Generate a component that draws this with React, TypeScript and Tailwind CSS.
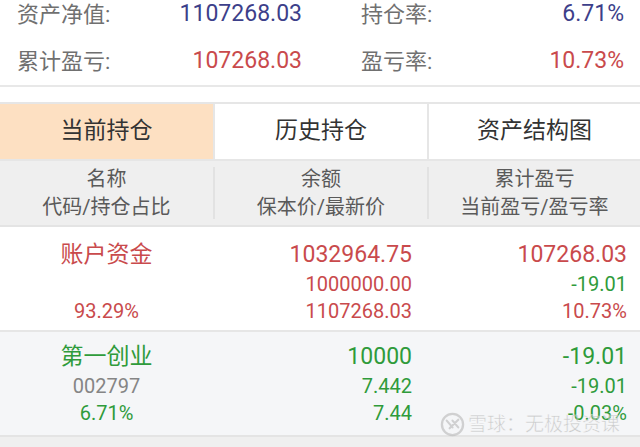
import React from 'react';

const font = { fontFamily: "Roboto, 'Noto Sans CJK SC', sans-serif" };

const RED = 'text-[#c94a4c]';
const GREEN = 'text-[#2f9b3b]';

function SummaryRow({ l1, v1, c1, l2, v2, c2 }: { l1: string; v1: string; c1: string; l2: string; v2: string; c2: string }) {
  return (
    <div className="flex h-[47px] items-center">
      <div className="flex w-1/2 items-center justify-between pl-[17px] pr-[18px]">
        <span className="text-[22px] text-[#707070]">{l1}</span>
        <span className={`text-[23px] ${c1}`}>{v1}</span>
      </div>
      <div className="flex w-1/2 items-center justify-between pl-[41px] pr-[16px]">
        <span className="text-[22px] text-[#707070]">{l2}</span>
        <span className={`text-[23px] ${c2}`}>{v2}</span>
      </div>
    </div>
  );
}

function Watermark() {
  return (
    <div className="pointer-events-none absolute bottom-[8px] right-[20px] flex items-center gap-[3px] opacity-60">
      <svg width="25" height="25" viewBox="0 0 26 26" fill="none">
        <circle cx="13" cy="13" r="11" stroke="#b8b8b8" strokeWidth="2.4" />
        <path d="M7 9 L13 16 M13 9 L19 16 M10 17 L19 8" stroke="#b8b8b8" strokeWidth="2.2" strokeLinecap="round" />
      </svg>
      <span className="text-[19px] text-[#b0b0b0]" style={{ WebkitTextStroke: '0.4px #fff' }}>
        雪球：无极投资课
      </span>
    </div>
  );
}

export default function App() {
  return (
    <div className="relative h-[447px] w-[640px] overflow-hidden bg-[#efefef]" style={font}>
      {/* summary */}
      <div className="-mt-[9px] bg-white pb-[49px]">
        <div className="border-b-2 border-[#e8e8e8]">
          <SummaryRow l1="资产净值:" v1="1107268.03" c1="text-[#3d3f8a]" l2="持仓率:" v2="6.71%" c2="text-[#3d3f8a]" />
          <SummaryRow l1="累计盈亏:" v1="107268.03" c1={RED} l2="盈亏率:" v2="10.73%" c2={RED} />
        </div>
      </div>

      {/* tabs */}
      <div className="-mt-[34px] flex h-[59px] border-y-2 border-[#e6e6e6] bg-white text-[23px] text-[#333]">
        <div className="flex w-[213px] items-center justify-center bg-[#fde0c2]">当前持仓</div>
        <div className="flex w-[214px] items-center justify-center border-l-2 border-[#e6e6e6]">历史持仓</div>
        <div className="flex flex-1 items-center justify-center border-l-2 border-[#e6e6e6]">资产结构图</div>
      </div>

      {/* header */}
      <div className="flex h-[66px] items-center border-b-2 border-[#e4e4e4] bg-[#efefef] text-[20px] leading-[28px] text-[#5a5a5a]">
        <div className="flex w-[213px] flex-col items-center">
          <span>名称</span>
          <span>代码/持仓占比</span>
        </div>
        <div className="h-[52px] w-[2px] bg-[#e2e2e2]" />
        <div className="flex w-[212px] flex-col items-center">
          <span>余额</span>
          <span>保本价/最新价</span>
        </div>
        <div className="h-[52px] w-[2px] bg-[#e2e2e2]" />
        <div className="flex flex-1 flex-col items-center">
          <span>累计盈亏</span>
          <span>当前盈亏/盈亏率</span>
        </div>
      </div>

      {/* account funds */}
      <div className="flex h-[105px] border-b-2 border-[#e6e6e6] bg-white pt-[12px]">
        <div className={`flex w-[213px] flex-col items-center ${RED}`}>
          <span className="h-[32px] text-[23px] leading-[32px]">账户资金</span>
          <span className="h-[27px]" />
          <span className="text-[20px] leading-[27px]">93.29%</span>
        </div>
        <div className={`flex w-[214px] flex-col items-end pr-[15px] ${RED}`}>
          <span className="text-[23px] leading-[32px]">1032964.75</span>
          <span className="text-[20px] leading-[27px]">1000000.00</span>
          <span className="text-[20px] leading-[27px]">1107268.03</span>
        </div>
        <div className="flex flex-1 flex-col items-end pr-[13px]">
          <span className={`text-[23px] leading-[32px] ${RED}`}>107268.03</span>
          <span className={`text-[20px] leading-[27px] ${GREEN}`}>-19.01</span>
          <span className={`text-[20px] leading-[27px] ${RED}`}>10.73%</span>
        </div>
      </div>

      {/* holding */}
      <div className="flex h-[105px] border-b-2 border-[#e4e4e4] bg-[#f5f6f8] pt-[9px]">
        <div className="flex w-[213px] flex-col items-center">
          <span className={`text-[23px] leading-[32px] ${GREEN}`}>第一创业</span>
          <span className="text-[20px] leading-[27px] text-[#858585]">002797</span>
          <span className={`text-[20px] leading-[27px] ${GREEN}`}>6.71%</span>
        </div>
        <div className={`flex w-[214px] flex-col items-end pr-[15px] ${GREEN}`}>
          <span className="text-[23px] leading-[32px]">10000</span>
          <span className="text-[20px] leading-[27px]">7.442</span>
          <span className="text-[20px] leading-[27px]">7.44</span>
        </div>
        <div className={`flex flex-1 flex-col items-end pr-[13px] ${GREEN}`}>
          <span className="text-[23px] leading-[32px]">-19.01</span>
          <span className="text-[20px] leading-[27px]">-19.01</span>
          <span className="text-[20px] leading-[27px]">-0.03%</span>
        </div>
      </div>

      <Watermark />
    </div>
  );
}
